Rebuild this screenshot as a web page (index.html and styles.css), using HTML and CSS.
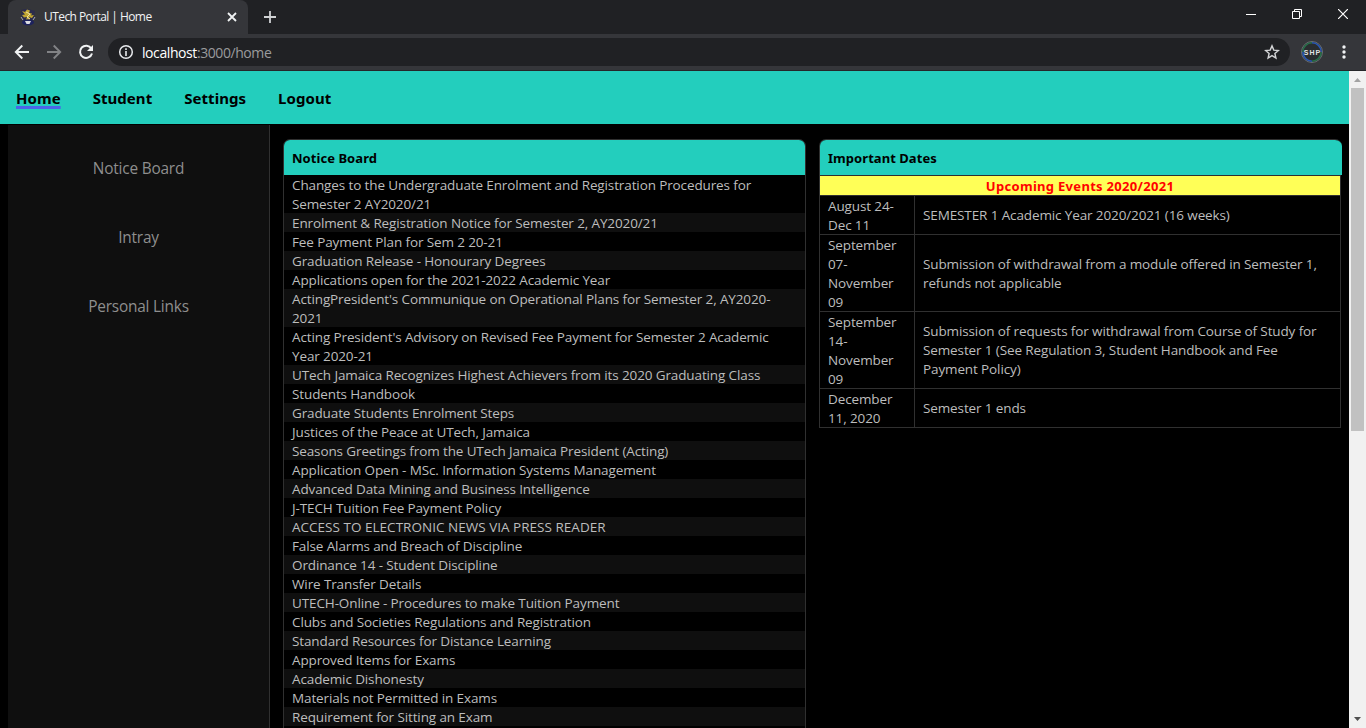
FILE: index.html
```html
<!DOCTYPE html>
<html lang="en">
<head>
<meta charset="utf-8">
<title>UTech Portal | Home</title>
<link rel="stylesheet" href="styles.css">
</head>
<body>
<header class="browser">
  <div class="tabstrip">
    <div class="tab">
      <svg class="favicon" width="16" height="18" viewBox="0 0 16 18"><path d="M1 2l4-1 5 .5L15 3l-1 7-2 3H4L2 9z" fill="#2b2c4c"/><path d="M2 3l3 1 2-2.500 3 1L9 5l3 .5-1 2 3-.5-2 3-3-1 1 3H6l1-3-3 .500L2 7l3-.5z" fill="#c0a632"/><path d="M6 4l4 2-3 3 3 2" stroke="#eee1a0" fill="none"/><ellipse cx="8" cy="14.300" rx="6" ry="3" fill="#1d225d"/><path d="M5 13h6l-1.500 3h-3z" fill="#dcdcdf"/><path d="M1 9l2 3M15 9l-2 3" stroke="#a9a9b8"/></svg>
      <span class="tab-title">UTech Portal | Home</span>
      <svg class="tab-close" width="10" height="10" viewBox="0 0 10 10"><path d="M1 1l8 8M9 1L1 9" stroke="#f1f3f4" stroke-width="1.8"/></svg>
    </div>
    <svg class="new-tab" width="12" height="12" viewBox="0 0 12 12"><path d="M6 0v12M0 6h12" stroke="#d0d2d4" stroke-width="1.8"/></svg>
    <div class="window-controls">
      <svg width="10" height="10" viewBox="0 0 10 10"><path d="M0 5.5h10" stroke="#fff"/></svg>
      <svg width="10" height="10" viewBox="0 0 10 10"><path d="M.5 2.5h7v7h-7zM2.5 2.5v-2h7v7h-2" fill="none" stroke="#fff"/></svg>
      <svg width="10" height="10" viewBox="0 0 10 10"><path d="M0 0l10 10M10 0L0 10" stroke="#fff" stroke-width="1.2"/></svg>
    </div>
  </div>
  <div class="toolbar">
    <svg class="nav-icon" width="16" height="16" viewBox="0 0 16 16"><path d="M15 8H2M8.300 1.500L1.800 8l6.500 6.500" fill="none" stroke="#f1f3f4" stroke-width="1.9"/></svg>
    <svg class="nav-icon" width="16" height="16" viewBox="0 0 16 16"><path d="M1 8h13M7.700 1.500L14.200 8l-6.500 6.500" fill="none" stroke="#828386" stroke-width="1.900"/></svg>
    <svg class="nav-icon" width="16" height="16" viewBox="0 0 16 16"><path d="M13.300 4.500A6.100 6.100 0 1 0 14 9.500" fill="none" stroke="#f1f3f4" stroke-width="2"/><path d="M15 1v6H9z" fill="#f1f3f4"/></svg>
    <div class="address">
      <svg width="16" height="16" viewBox="0 0 16 16"><circle cx="8" cy="8" r="6.300" fill="none" stroke="#e8eaed" stroke-width="1.500"/><path d="M8 4.200v1.700M8 7v5" stroke="#e8eaed" stroke-width="1.600"/></svg>
      <div class="url"><span class="host">localhost</span>:3000/home</div>
      <svg class="star" width="16" height="16" viewBox="0 0 16 16"><path d="M8 1.900l1.800 4.200 4.600.4-3.500 3 1 4.500L8 11.600 4.100 14l1-4.500-3.500-3 4.600-.4z" fill="none" stroke="#d4d5d7" stroke-width="1.400"/></svg>
    </div>
    <svg class="avatar" width="24" height="24" viewBox="0 0 24 24"><circle cx="12" cy="12" r="10.500" fill="#292d2f" stroke="#6a6e72"/><path d="M12 2.800A9.200 9.200 0 0 1 21.200 12M12 21.200A9.200 9.200 0 0 1 2.800 12" fill="none" stroke="#2857b3" stroke-width="1.600"/><path d="M21.200 12A9.200 9.200 0 0 1 12 21.200M2.800 12A9.200 9.200 0 0 1 12 2.800" fill="none" stroke="#287049" stroke-width="1.600"/><text x="12.500" y="14.700" text-anchor="middle" class="avatar-text">SHP</text></svg>
    <svg class="menu" width="4" height="14" viewBox="0 0 4 14" fill="#f1f3f4"><circle cx="2" cy="2" r="1.700"/><circle cx="2" cy="7" r="1.700"/><circle cx="2" cy="12" r="1.700"/></svg>
  </div>
</header>
<div class="viewport">
  <div class="page">
    <nav class="navbar"><a class="active">Home</a><a>Student</a><a>Settings</a><a>Logout</a></nav>
    <main class="content">
      <aside class="sidebar"><a>Notice Board</a><a>Intray</a><a>Personal Links</a></aside>
      <section class="card notices">
        <h2>Notice Board</h2>
        <ul>
          <li>Changes to the Undergraduate Enrolment and Registration Procedures for<br>Semester 2 AY2020/21</li>
          <li>Enrolment &amp; Registration Notice for Semester 2, AY2020/21</li>
          <li>Fee Payment Plan for Sem 2 20-21</li>
          <li>Graduation Release - Honourary Degrees</li>
          <li>Applications open for the 2021-2022 Academic Year</li>
          <li>ActingPresident's Communique on Operational Plans for Semester 2, AY2020-<br>2021</li>
          <li>Acting President's Advisory on Revised Fee Payment for Semester 2 Academic<br>Year 2020-21</li>
          <li>UTech Jamaica Recognizes Highest Achievers from its 2020 Graduating Class</li>
          <li>Students Handbook</li>
          <li>Graduate Students Enrolment Steps</li>
          <li>Justices of the Peace at UTech, Jamaica</li>
          <li>Seasons Greetings from the UTech Jamaica President (Acting)</li>
          <li>Application Open - MSc. Information Systems Management</li>
          <li>Advanced Data Mining and Business Intelligence</li>
          <li>J-TECH Tuition Fee Payment Policy</li>
          <li class="caps">ACCESS TO ELECTRONIC NEWS VIA PRESS READER</li>
          <li>False Alarms and Breach of Discipline</li>
          <li>Ordinance 14 - Student Discipline</li>
          <li>Wire Transfer Details</li>
          <li>UTECH-Online - Procedures to make Tuition Payment</li>
          <li>Clubs and Societies Regulations and Registration</li>
          <li>Standard Resources for Distance Learning</li>
          <li>Approved Items for Exams</li>
          <li>Academic Dishonesty</li>
          <li>Materials not Permitted in Exams</li>
          <li>Requirement for Sitting an Exam</li>
          <li>&nbsp;</li>
        </ul>
      </section>
      <section class="card dates">
        <h2>Important Dates</h2>
        <div class="dates-table">
          <div class="events-title">Upcoming Events 2020/2021</div>
          <div class="event"><div>August 24-<br>Dec 11</div><div>SEMESTER 1 Academic Year 2020/2021 (16 weeks)</div></div>
          <div class="event"><div>September<br>07-<br>November<br>09</div><div class="two-line">Submission of withdrawal from a module offered in Semester 1,<br>refunds not applicable</div></div>
          <div class="event"><div>September<br>14-<br>November<br>09</div><div>Submission of requests for withdrawal from Course of Study for<br>Semester 1 (See Regulation 3, Student Handbook and Fee<br>Payment Policy)</div></div>
          <div class="event"><div>December<br>11, 2020</div><div>Semester 1 ends</div></div>
        </div>
      </section>
    </main>
  </div>
  <div class="scrollbar">
    <svg width="17" height="17" viewBox="0 0 17 17"><path d="M5 11l3.500-4 3.500 4z" fill="#a3a3a3"/></svg>
    <div class="thumb"></div>
    <svg class="down" width="17" height="17" viewBox="0 0 17 17"><path d="M5 6l3.500 4L12 6z" fill="#505050"/></svg>
  </div>
</div>
</body>
</html>
```
FILE: styles.css
```css
* { box-sizing: border-box; }
body { margin: 0; height: 728px; overflow: hidden; background: #000; font-family: "Open Sans", "Noto Sans", sans-serif; display: flex; flex-direction: column; }
svg { display: block; flex: none; }
.browser { flex: none; height: 71px; background: #35363a; border-bottom: 1px solid #252629; }
.tabstrip { height: 34px; background: #202124; display: flex; align-items: center; padding-left: 8px; }
.tab { width: 240px; height: 34px; background: #35363a; border-radius: 8px 8px 0 0; display: flex; align-items: center; padding: 0 11px 0 12px; }
.tab-title { margin-left: 8px; font-size: 12px; letter-spacing: -0.57px; color: #f1f3f4; flex: 1; white-space: nowrap; line-height: 16px; padding-bottom: 1px; }
.new-tab { margin-left: 16px; }
.window-controls { margin-left: auto; display: flex; gap: 36px; padding: 0 18px 6px 0; }
.toolbar { height: 36px; display: flex; align-items: center; padding-left: 14px; }
.nav-icon { margin-right: 16px; }
.address { margin-left: -2px; width: 1182px; height: 28px; border-radius: 14px; background: #202124; display: flex; align-items: center; padding: 0 10px; }
.url { margin-left: 8px; flex: 1; font-size: 14px; letter-spacing: -0.42px; color: #9a9b9d; }
.host { color: #fff; }
.avatar { margin-left: 10px; }
.avatar-text { font: bold 7px "Liberation Sans", sans-serif; letter-spacing: 1px; fill: #e0e2e4; }
.menu { margin-left: 18px; }
.viewport { flex: 1; min-height: 0; display: flex; }
.page { width: 1349px; height: 657px; overflow: hidden; }
.navbar { height: 53px; background: #23cebd; display: flex; align-items: center; gap: 32px; padding: 0 16px; font-family: "Noto Sans", sans-serif; font-size: 15px; letter-spacing: 0.05px; font-weight: 700; color: #000; }
.navbar a { line-height: 22px; white-space: nowrap; }
.active { text-decoration: underline #4b66e8 3px; text-underline-offset: 2px; }
.content { display: flex; align-items: flex-start; padding-left: 8px; }
.sidebar { width: 262px; height: 604px; margin-top: 1px; padding-top: 33px; background: #0f0f0f; border-right: 1px solid #303030; display: flex; flex-direction: column; align-items: center; gap: 47px; color: #8e8e8e; font-size: 15.4px; letter-spacing: -0.2px; line-height: 22px; }
.card { width: 523px; margin-top: 15px; border: 1px solid #303030; border-radius: 7px 7px 0 0; font-size: 13.5px; letter-spacing: -0.12px; line-height: 19px; color: #bdbdbd; overflow: hidden; }
.card h2 { margin: 0; height: 35px; line-height: 37px; padding: 0 8px; background: #23cebd; color: #000; font-family: "Noto Sans", sans-serif; font-size: 13px; letter-spacing: 0.05px; }
.notices { margin-left: 13px; }
.notices ul { list-style: none; margin: 0; padding: 0; }
.notices li { padding: 1px 8px 0; margin-bottom: -1px; white-space: nowrap; background: #000; }
.notices li:nth-child(even) { background: #0f0f0f; }
.caps { letter-spacing: 0.02px; }
.dates { margin-left: 13px; border-width: 1px 0 0 1px; }
.dates-table { width: 521px; border: 1px solid #303030; border-width: 1px 1px 0 0; }
.events-title { height: 19px; line-height: 21px; background: #ffff57; color: #f00; font-family: "Noto Sans", sans-serif; font-size: 13px; letter-spacing: 0.3px; font-weight: 700; text-align: center; }
.event { display: grid; grid-template-columns: 94px 1fr; border-top: 1px solid #303030; }
.event:last-child { border-bottom: 1px solid #303030; }
.event > div { padding: 0 8px; white-space: nowrap; align-content: center; }
.event > div:first-child { padding-top: 1px; margin-bottom: -1px; }
.event > div + div { border-left: 1px solid #303030; }
.event > .two-line { padding-top: 2px; }
.scrollbar { width: 17px; background: #f1f1f1; display: flex; flex-direction: column; align-items: center; }
.thumb { width: 13px; height: 343px; background: #c1c1c1; }
.down { margin-top: auto; }
```
